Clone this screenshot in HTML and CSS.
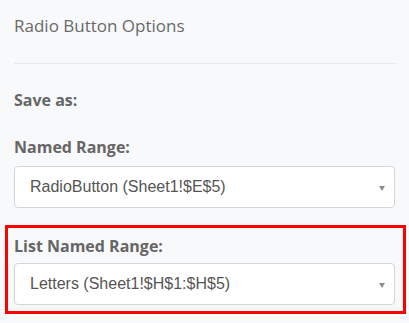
FILE: index.html
```html
<!DOCTYPE html>
<html lang="en">
<head>
    <meta charset="UTF-8">
    <meta name="viewport" content="width=device-width, initial-scale=1.0">
    <title>Radio Button Options</title>
    <link rel="stylesheet" href="styles.css">
</head>
<body>
    <div class="panel">
        <div class="panel-title">Radio Button Options</div>
        <div class="divider"></div>
        <div class="label save-as">Save as:</div>
        <div class="label">Named Range:</div>
        <div class="select">
            <span class="select-text">RadioButton (Sheet1!$E$5)</span>
            <span class="caret"></span>
        </div>
        <div class="highlight">
            <div class="label">List Named Range:</div>
            <div class="select select-list">
                <span class="select-text">Letters (Sheet1!$H$1:$H$5)</span>
                <span class="caret"></span>
            </div>
        </div>
    </div>
</body>
</html>
```

FILE: styles.css
```css
*{
    margin: 0;
    padding: 0;
    box-sizing: border-box;
}
body{
    background-color: #f8f9fa;
    font-family: "Open Sans", "Liberation Sans", sans-serif;
}
.panel{
    padding: 15px 14px 0 14px;
}
.panel-title{
    font-size: 17px;
    line-height: 22px;
    color: #696969;
}
.divider{
    height: 1px;
    background-color: #e7e9ec;
    margin-top: 26px;
}
.label{
    font-size: 16px;
    line-height: 22px;
    font-weight: 700;
    color: #666;
}
.save-as{
    margin-top: 25px;
    margin-bottom: 25px;
}
.select{
    display: flex;
    align-items: center;
    justify-content: space-between;
    height: 42px;
    margin-top: 8px;
    padding: 0 9px 0 15px;
    background-color: #fff;
    border: 1px solid #d3d5d8;
    border-radius: 4px;
}
.select-text{
    font-family: "Liberation Sans", Arial, sans-serif;
    font-size: 16px;
    color: #555;
}
.caret{
    width: 0;
    height: 0;
    margin-top: 2px;
    border-left: 3.5px solid transparent;
    border-right: 3.5px solid transparent;
    border-top: 5px solid #8c8c8c;
}
.highlight{
    margin: 17px -11px 0 -9px;
    padding: 7px 8px 6px 6px;
    border: 3px solid #ff0000;
}
.select-list{
    margin-top: 6px;
}
```
